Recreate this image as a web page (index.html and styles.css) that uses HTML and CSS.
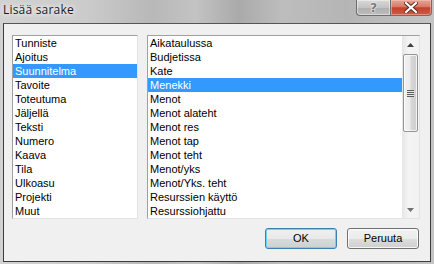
FILE: index.html
```html
<!DOCTYPE html>
<html>
<head>
<meta charset="utf-8">
<link rel="stylesheet" href="styles.css">
</head>
<body>
<div class="window">
  <div class="titlebar">
    <span class="title">Lisää sarake</span>
    <div class="caption-buttons">
      <div class="cap-btn help"><span class="qmark">?</span></div>
      <div class="cap-btn close">
        <svg width="14" height="11" viewBox="0 0 14 11"><path d="M2 1 L12 10 M12 1 L2 10" stroke="#5a2a24" stroke-width="4" stroke-linecap="square"/><path d="M2 1 L12 10 M12 1 L2 10" stroke="#ffffff" stroke-width="2.2" stroke-linecap="square"/></svg>
      </div>
    </div>
  </div>
  <div class="client">
    <div class="lists">
      <ul class="listbox left">
        <li>Tunniste</li>
        <li>Ajoitus</li>
        <li class="sel">Suunnitelma</li>
        <li>Tavoite</li>
        <li>Toteutuma</li>
        <li>Jäljellä</li>
        <li>Teksti</li>
        <li>Numero</li>
        <li>Kaava</li>
        <li>Tila</li>
        <li>Ulkoasu</li>
        <li>Projekti</li>
        <li>Muut</li>
      </ul>
      <div class="listbox right">
        <ul class="items">
          <li>Aikataulussa</li>
          <li>Budjetissa</li>
          <li>Kate</li>
          <li class="sel">Menekki</li>
          <li>Menot</li>
          <li>Menot alateht</li>
          <li>Menot res</li>
          <li>Menot tap</li>
          <li>Menot teht</li>
          <li>Menot/yks</li>
          <li>Menot/Yks. teht</li>
          <li>Resurssien käyttö</li>
          <li>Resurssiohjattu</li>
        </ul>
        <div class="scrollbar">
          <div class="arrow up"><svg width="7" height="4" viewBox="0 0 7 4"><path d="M0 4 L3.5 0 L7 4 Z" fill="#404040"/></svg></div>
          <div class="thumb"><div class="grip"></div></div>
          <div class="track"></div>
          <div class="arrow down"><svg width="7" height="4" viewBox="0 0 7 4"><path d="M0 0 L3.5 4 L7 0 Z" fill="#707070"/></svg></div>
        </div>
      </div>
    </div>
    <div class="buttons">
      <div class="btn default">OK</div>
      <div class="btn">Peruuta</div>
    </div>
  </div>
</div>
</body>
</html>
```
FILE: styles.css
```css
html, body {
  margin: 0;
  padding: 0;
  background: #b9b9b9;
}
.window {
  width: 434px;
  height: 264px;
  box-sizing: border-box;
  padding: 0 3px 2px 3px;
  display: flex;
  flex-direction: column;
  background: linear-gradient(90deg, #d2d2d2 0%, #cbcbcb 20%, #b8b8b8 35%, #c3c3c3 45%, #aaaaaa 55%, #bdbdbd 65%, #b5b5b5 80%, #c4c4c4 100%);
  font-family: "Liberation Sans", Arial, sans-serif;
}
.titlebar {
  height: 23px;
  flex: none;
  display: flex;
  align-items: flex-start;
  justify-content: space-between;
  margin: 0 -3px;
  padding: 0 2px 0 3px;
}
.title {
  font-family: "Open Sans", "Noto Sans", sans-serif;
  font-size: 12px;
  color: #1a1a1a;
  line-height: 14px;
  margin-top: 3px;
  text-shadow: 0 0 4px #ffffff, 0 0 6px #f0f0f0;
  letter-spacing: 0.2px;
}
.caption-buttons {
  display: flex;
}
.cap-btn {
  height: 16px;
  box-sizing: border-box;
  display: flex;
  align-items: center;
  justify-content: center;
  border: 1px solid #6d6d6d;
  border-top: none;
}
.help {
  width: 34px;
  border-right: none;
  border-radius: 0 0 0 4px;
  background: linear-gradient(180deg, #d8d8d8 0%, #c4c4c4 50%, #b0b0b0 51%, #bcbcbc 100%);
  box-shadow: inset 0 0 0 1px rgba(255,255,255,0.45);
}
.qmark {
  font-family: "DejaVu Sans", sans-serif;
  font-weight: bold;
  font-size: 13px;
  line-height: 13px;
  color: #7a7a7a;
  text-shadow: 0 0 1px #fff, 0 0 1px #fff, 0 0 2px #fff;
}
.close {
  width: 42px;
  border-radius: 0 0 4px 0;
  background: linear-gradient(180deg, #e6a596 0%, #d67a66 45%, #c4412a 52%, #cf5a44 100%);
  box-shadow: inset 0 0 0 1px rgba(255,200,190,0.5);
}
.client {
  flex: 1;
  background: #f0f0f0;
  border: 1px solid #3c3c3c;
  border-top-color: #555;
  padding: 11px 10px 0 8px;
  display: flex;
  flex-direction: column;
}
.lists {
  display: flex;
  gap: 9px;
  height: 184px;
}
.listbox {
  margin: 0;
  padding: 0;
  list-style: none;
  background: #fff;
  border: 1px solid #e3e3e3;
  border-top-color: #a0a0a0;
  border-left-color: #a0a0a0;
  box-sizing: border-box;
  height: 184px;
}
.listbox.left {
  width: 126px;
}
.listbox.right {
  width: 273px;
  display: flex;
}
.items {
  margin: 0;
  padding: 0;
  list-style: none;
  flex: 1;
}
li {
  font-size: 11px;
  line-height: 14px;
  height: 14px;
  padding-left: 2px;
  color: #000;
  white-space: nowrap;
}
li.sel {
  background: #3399ff;
  color: #fff;
}
.scrollbar {
  width: 17px;
  flex: none;
  display: flex;
  flex-direction: column;
  background: linear-gradient(90deg, #e6e6e6 0%, #f4f4f4 40%, #f2f2f2 100%);
}
.arrow {
  height: 17px;
  flex: none;
  display: flex;
  align-items: center;
  justify-content: center;
}
.thumb {
  height: 78px;
  margin: 1px 1px 0 1px;
  flex: none;
  box-sizing: border-box;
  border: 1px solid #959595;
  border-radius: 2px;
  background: linear-gradient(90deg, #f2f2f2 0%, #ebebeb 45%, #d6d6d6 55%, #cfcfcf 100%);
  box-shadow: inset 0 0 0 1px rgba(255,255,255,0.7);
  display: flex;
  align-items: center;
  justify-content: center;
}
.grip {
  width: 7px;
  height: 7px;
  background: repeating-linear-gradient(180deg, #5d5d5d 0px, #5d5d5d 1px, #e8e8e8 1px, #e8e8e8 2px);
}
.track {
  flex: 1;
}
.buttons {
  display: flex;
  justify-content: flex-end;
  gap: 10px;
  margin-top: 9px;
  padding-right: 1px;
}
.btn {
  width: 72px;
  height: 21px;
  box-sizing: border-box;
  border: 1px solid #707070;
  border-radius: 3px;
  background: linear-gradient(180deg, #f2f2f2 0%, #ebebeb 50%, #dddddd 51%, #cfcfcf 100%);
  box-shadow: inset 0 0 0 1px rgba(255,255,255,0.8);
  font-size: 11px;
  line-height: 19px;
  text-align: center;
  color: #000;
}
.btn.default {
  border-color: #3c7fb1;
  box-shadow: inset 0 0 0 1px #6ed4f7;
  background: linear-gradient(180deg, #f0f0f0 0%, #e9e9e9 50%, #dadada 51%, #d0d0d0 100%);
}
```
